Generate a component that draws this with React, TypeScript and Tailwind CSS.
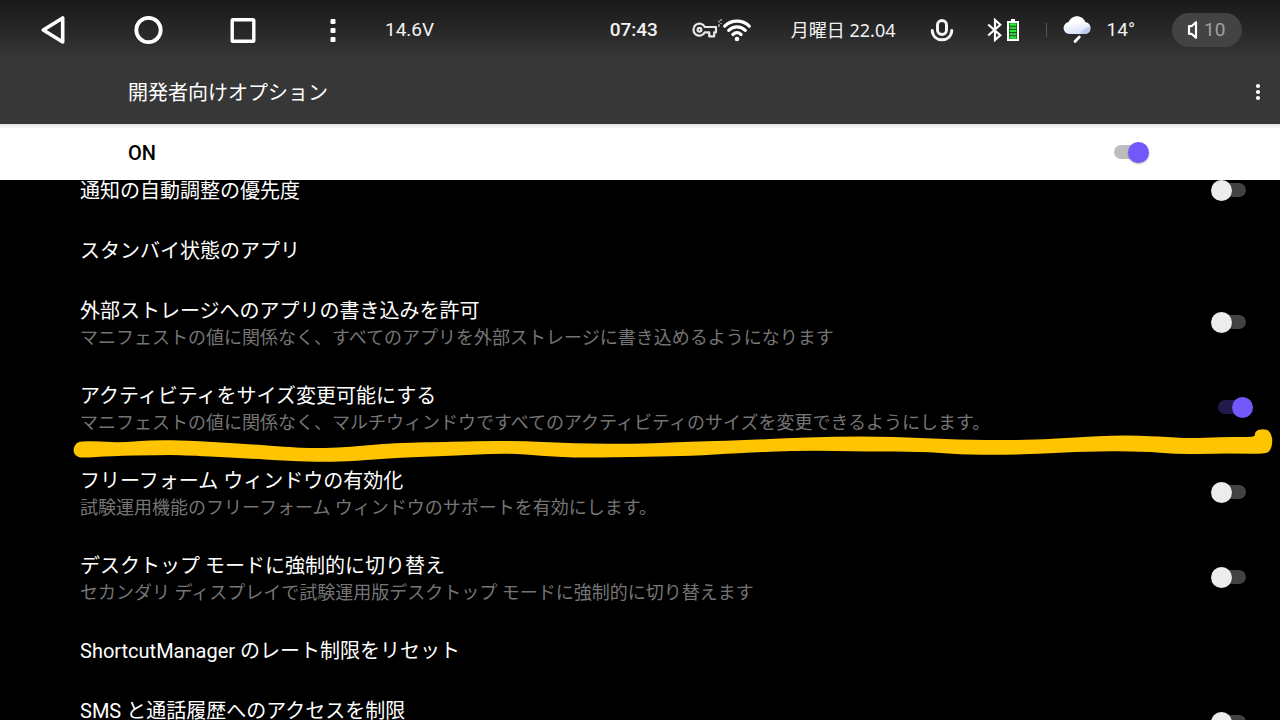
import React, { useState } from 'react';

type Option = {
  id: string;
  title: string;
  summary?: string;
  toggle?: boolean;
  marked?: boolean;
  tall?: boolean;
};

const OPTIONS: Option[] = [
  { id: 'notification-ranking', title: '通知の自動調整の優先度', toggle: true },
  { id: 'standby-apps', title: 'スタンバイ状態のアプリ' },
  {
    id: 'external-storage',
    title: '外部ストレージへのアプリの書き込みを許可',
    summary: 'マニフェストの値に関係なく、すべてのアプリを外部ストレージに書き込めるようになります',
    toggle: true,
  },
  {
    id: 'resizable-activities',
    title: 'アクティビティをサイズ変更可能にする',
    summary: 'マニフェストの値に関係なく、マルチウィンドウですべてのアクティビティのサイズを変更できるようにします。',
    toggle: true,
    marked: true,
  },
  {
    id: 'freeform-windows',
    title: 'フリーフォーム ウィンドウの有効化',
    summary: '試験運用機能のフリーフォーム ウィンドウのサポートを有効にします。',
    toggle: true,
  },
  {
    id: 'desktop-mode',
    title: 'デスクトップ モードに強制的に切り替え',
    summary: 'セカンダリ ディスプレイで試験運用版デスクトップ モードに強制的に切り替えます',
    toggle: true,
  },
  { id: 'shortcut-manager', title: 'ShortcutManager のレート制限をリセット' },
  { id: 'sms-call-log', title: 'SMS と通話履歴へのアクセスを制限', toggle: true, tall: true },
];

// Outline of the marker stroke, clockwise from the left end
const MARKER: [number, number][] = [
  [76, 443], [82, 441], [100, 441.5], [122, 442.5], [140, 441], [160, 440], [185, 440.5], [240, 443.5],
  [300, 448], [325, 448], [350, 447], [380, 444], [410, 442.5], [440, 442], [510, 440.5], [575, 443.5],
  [640, 444], [690, 441.5], [740, 440.5], [800, 437.5], [867, 436], [920, 438], [970, 440], [1030, 440],
  [1075, 437.5], [1120, 435], [1160, 436.5], [1190, 438.5], [1220, 437], [1248, 437], [1255, 436.5],
  [1255, 431], [1263, 428.5], [1270, 431], [1273, 441], [1270, 452], [1262, 454], [1240, 453.5],
  [1215, 453.5], [1180, 454.5], [1140, 451], [1085, 451.5], [1045, 453.5], [1000, 455], [960, 454.5],
  [920, 451.5], [870, 451.5], [800, 450.5], [740, 453], [690, 456], [650, 456.5], [580, 458], [545, 456],
  [505, 453], [450, 456], [400, 457.5], [355, 461], [325, 462], [290, 461], [240, 458], [180, 455],
  [160, 455], [110, 456], [82, 458], [75, 456], [73, 449.5],
];

const smoothPath = (points: [number, number][]) => {
  const last = points[points.length - 1];
  let d = `M${(last[0] + points[0][0]) / 2} ${(last[1] + points[0][1]) / 2}`;
  points.forEach(([x, y], i) => {
    const [nx, ny] = points[(i + 1) % points.length];
    d += `Q${x} ${y} ${(x + nx) / 2} ${(y + ny) / 2}`;
  });
  return d + 'z';
};

type SwitchProps = {
  id: string;
  checked: boolean;
  onChange: () => void;
  light?: boolean;
};

function Switch({ id, checked, onChange, light }: SwitchProps) {
  const track = light
    ? 'before:bg-[#bdbdbd]'
    : 'before:bg-[#424242] checked:before:bg-[#221a4c]';
  return (
    <input
      id={id}
      type="checkbox"
      role="switch"
      checked={checked}
      onChange={onChange}
      className={`relative h-[21px] w-[42px] shrink-0 cursor-pointer appearance-none before:absolute before:left-[7px] before:top-[3px] before:h-[14px] before:w-[28px] before:rounded-full after:absolute after:left-0 after:top-0 after:h-[21px] after:w-[21px] after:rounded-full after:bg-[#ececec] after:shadow-[0_1px_2px_rgba(0,0,0,0.3)] checked:after:left-[21px] checked:after:bg-[#7357fa] ${track}`}
    />
  );
}

function StatusBar() {
  return (
    <div className="flex h-[60px] shrink-0 items-center justify-between bg-linear-to-b from-[#191919] to-[#373737] pl-[5px] pr-[38px] text-[19px] leading-6 text-[#f2f2f2]">
      <div className="flex items-center">
        <button aria-label="Back" className="flex w-[95px] justify-center">
          <svg width="30" height="30" viewBox="0 0 30 30" fill="none" stroke="#fff" strokeWidth="3.600" strokeLinejoin="round">
            <path d="M24.700 3v24L5.300 15z" />
          </svg>
        </button>
        <button aria-label="Home" className="flex w-[95px] justify-center">
          <svg width="30" height="30" viewBox="0 0 30 30" fill="none" stroke="#fff" strokeWidth="3.800">
            <circle cx="15.500" cy="15" r="12.200" />
          </svg>
        </button>
        <button aria-label="Recents" className="flex w-[95px] justify-center">
          <svg width="30" height="30" viewBox="0 0 30 30" fill="none" stroke="#fff" strokeWidth="3.400">
            <rect x="4.200" y="4.700" width="21.600" height="21.600" rx="0.800" />
          </svg>
        </button>
        <button aria-label="Menu" className="flex w-[85px] justify-center">
          <svg width="30" height="30" viewBox="0 0 30 30" fill="#fff">
            <rect x="12.500" y="4" width="5" height="5" rx="1" />
            <rect x="12.500" y="13" width="5" height="5" rx="1" />
            <rect x="12.500" y="22" width="5" height="5" rx="1" />
          </svg>
        </button>
        <span className="pl-[10px]">14.6V</span>
      </div>

      <div className="flex items-center">
        <span className="mr-[34px] font-medium">07:43</span>

        <div className="mr-[39px] flex items-center">
          {/* vpn key */}
          <svg width="26" height="18" viewBox="0 0 26 18" fill="none" stroke="#e8e8e8" strokeWidth="2.200" strokeLinejoin="round">
            <path d="M12.800 6H24v5.300h-1.800v4h-5v-4h-4.400A6 6 0 1 1 12.800 6z" />
            <circle cx="7.500" cy="8.700" r="1.900" />
          </svg>
          <svg width="34" height="24" viewBox="0 0 34 24" fill="none" stroke="#fff" strokeLinecap="round">
            <path d="M1 2.500v2M1 6v3M3 1v2M3 5v1" stroke="#ccc" strokeWidth="1.200" strokeLinecap="butt" />
            <path d="M6.700 8.200C13.500 1.500 24.500 1.500 31.300 8.200" strokeWidth="3.200" />
            <path d="M10.700 12.400c4.800-4.600 11.800-4.600 16.600 0" strokeWidth="3.200" />
            <path d="M14.900 16.500c2.500-2.300 5.700-2.300 8.200 0" strokeWidth="3.200" />
            <circle cx="19" cy="21" r="2.300" fill="#fff" stroke="none" />
          </svg>
        </div>

        <span className="mr-[34px] font-['Noto_Sans','Noto_Sans_CJK_JP',sans-serif] text-[18px]">月曜日 22.04</span>

        <svg className="mr-[33px]" width="24" height="24" viewBox="0 0 24 24" fill="none" stroke="#f4f4f4" strokeWidth="3" strokeLinecap="round">
          <rect x="7.500" y="2.500" width="9" height="14" rx="4.500" />
          <path d="M2.200 12.500c.5 6 4.500 9.300 9.800 9.300s9.300-3.300 9.800-9.300" />
        </svg>

        {/* bluetooth and battery */}
        <svg className="mr-[27px]" width="32" height="24" viewBox="0 0 32 24" fill="none">
          <path d="M1.200 6.500 13.300 17.200 8 22V2l5.300 4.800L1.200 17.500" stroke="#fff" strokeWidth="2.200" />
          <path d="M24 1h4v2h-4z" fill="#fff" />
          <rect x="21" y="4" width="10" height="18" fill="#0c2b10" stroke="#fff" strokeWidth="2" />
          <path d="M22.500 6.500h7M22.500 13h7M22.500 19.500h7" stroke="#22f02c" strokeWidth="2.600" />
          <path d="M22.500 9.800h7M22.500 16.200h7" stroke="#3fc04a" strokeWidth="2.600" />
        </svg>

        <span className="mr-[16px] h-[14px] w-px bg-[#555]" />

        <svg className="mr-[16px]" width="28" height="28" viewBox="0 0 28 28">
          <defs>
            <linearGradient id="cloud" x1="0" y1="0" x2="0.300" y2="1">
              <stop offset="0.400" stopColor="#ffffff" />
              <stop offset="1" stopColor="#dbe3fa" />
            </linearGradient>
          </defs>
          <path d="M6 18a6 6 0 0 1-.4-11.900C7 2.500 10.300.2 14 .2s7.200 2.300 8.300 5.900a6 6 0 0 1-.3 11.900z" fill="url(#cloud)" />
          <path d="M17.500 18c1.200-4 4.500-6.500 10.200-7.500A6 6 0 0 1 22 18z" fill="#aebde8" opacity="0.600" />
          <path d="M16.300 21 12 25.500" stroke="#fff" strokeWidth="2.800" strokeLinecap="round" />
        </svg>

        <span className="mr-[37px]">14°</span>

        <button className="flex h-[34px] w-[70px] items-center rounded-full bg-[#434343] pl-[15px] text-[#a0a0a0]">
          <svg width="17" height="20" viewBox="0 0 17 20" fill="none" stroke="#fff" strokeWidth="2.200" strokeLinejoin="round">
            <path d="M2 6.200h2.500L9 2.200v15.600l-4.500-4H2z" />
          </svg>
          10
        </button>
      </div>
    </div>
  );
}

function Highlight() {
  return (
    <svg
      className="pointer-events-none absolute left-[70px] top-[60px] z-10 h-10 w-[calc(100%-70px)]"
      viewBox="70 425 1210 40"
      preserveAspectRatio="none"
      fill="#ffc400"
    >
      <path d={smoothPath(MARKER)} />
    </svg>
  );
}

export default function App() {
  const [enabled, setEnabled] = useState(true);
  const [values, setValues] = useState<Record<string, boolean>>({ 'resizable-activities': true });

  const toggle = (id: string) => {
    setValues((prev) => ({ ...prev, [id]: !prev[id] }));
  };

  return (
    <div className="flex h-screen flex-col overflow-hidden bg-black font-['Roboto','Noto_Sans_CJK_JP',sans-serif]" lang="ja">
      <StatusBar />

      <header className="flex h-16 shrink-0 items-center justify-between bg-[#373737] pl-32 pr-[7px] text-white">
        <h1 className="pt-[2px] text-[20px] leading-7">開発者向けオプション</h1>
        <button aria-label="その他のオプション" className="flex w-[30px] justify-center">
          <svg width="6" height="18" viewBox="0 0 6 18" fill="#fff">
            <circle cx="3" cy="3" r="2.100" />
            <circle cx="3" cy="9" r="2.100" />
            <circle cx="3" cy="15" r="2.100" />
          </svg>
        </button>
      </header>

      <div className="flex h-14 shrink-0 items-center justify-between bg-white bg-linear-to-b from-[#e4e4e4] to-white to-[5px] pl-32 pr-[131px]">
        <label htmlFor="master" className="pt-[2px] text-[20px] font-medium leading-7 text-black">ON</label>
        <Switch id="master" checked={enabled} onChange={() => setEnabled(!enabled)} light />
      </div>

      {/* the list is scrolled a little under the switch bar */}
      <main className="min-h-0 flex-1 overflow-hidden">
        <ul className="-mt-5">
          {OPTIONS.map((option) => (
            <li key={option.id} className="relative flex items-center justify-between py-[15px] pl-20 pr-[27px]">
              <label
                htmlFor={option.toggle ? option.id : undefined}
                className={option.tall ? 'min-h-[55px] pt-[2px]' : 'pt-[2px]'}
              >
                <span className="block text-[20px] leading-7 text-white">{option.title}</span>
                {option.summary && (
                  <span className="block text-[18px] leading-[25px] text-[#757575]">{option.summary}</span>
                )}
              </label>
              {option.toggle && (
                <Switch id={option.id} checked={!!values[option.id]} onChange={() => toggle(option.id)} />
              )}
              {option.marked && <Highlight />}
            </li>
          ))}
        </ul>
      </main>
    </div>
  );
}
